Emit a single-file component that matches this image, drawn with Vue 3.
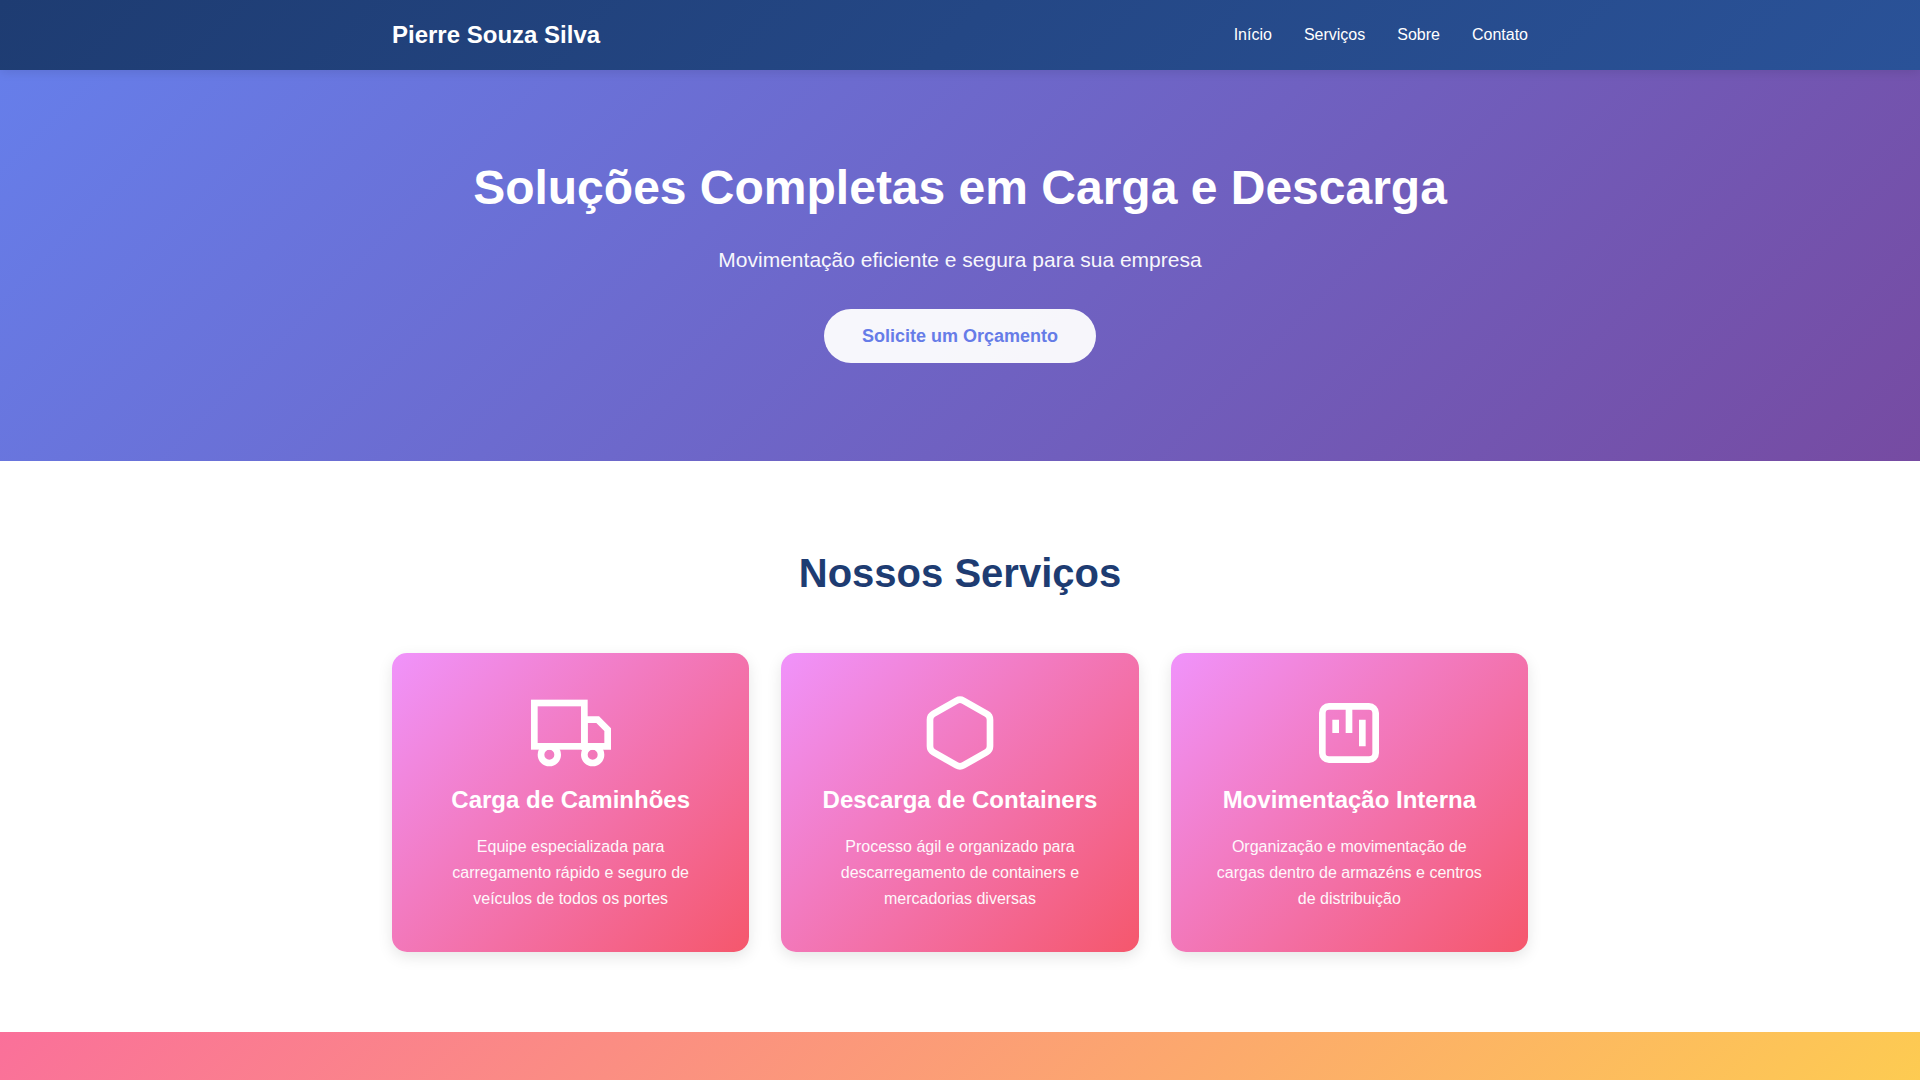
<script setup>
const links = [
  { label: 'Início', href: '#inicio' },
  { label: 'Serviços', href: '#servicos' },
  { label: 'Sobre', href: '#sobre' },
  { label: 'Contato', href: '#contato' },
]

const services = [
  {
    icon: 'truck',
    title: 'Carga de Caminhões',
    text: 'Equipe especializada para carregamento rápido e seguro de veículos de todos os portes',
  },
  {
    icon: 'container',
    title: 'Descarga de Containers',
    text: 'Processo ágil e organizado para descarregamento de containers e mercadorias diversas',
  },
  {
    icon: 'board',
    title: 'Movimentação Interna',
    text: 'Organização e movimentação de cargas dentro de armazéns e centros de distribuição',
  },
]
</script>

<template>
  <div class="page">
    <header class="header">
      <div class="container header-row">
        <div class="logo">Pierre Souza Silva</div>
        <nav class="nav">
          <a v-for="link in links" :key="link.href" :href="link.href">{{ link.label }}</a>
        </nav>
      </div>
    </header>

    <section id="inicio" class="hero">
      <div class="container">
        <h1>Soluções Completas em Carga e Descarga</h1>
        <p>Movimentação eficiente e segura para sua empresa</p>
        <a class="cta" href="#contato">Solicite um Orçamento</a>
      </div>
    </section>

    <section id="servicos" class="services">
      <div class="container">
        <h2>Nossos Serviços</h2>
        <div class="grid">
          <article v-for="service in services" :key="service.icon" class="card">
            <svg class="icon" viewBox="0 0 24 24" aria-hidden="true">
              <template v-if="service.icon === 'truck'">
                <rect x="1" y="3" width="15" height="13" />
                <polygon points="16 8 20 8 23 11 23 16 16 16 16 8" />
                <circle cx="5.5" cy="18.5" r="2.5" />
                <circle cx="18.5" cy="18.5" r="2.5" />
              </template>
              <path
                v-else-if="service.icon === 'container'"
                d="M21 16V8a2 2 0 0 0-1-1.73l-7-4a2 2 0 0 0-2 0l-7 4A2 2 0 0 0 3 8v8a2 2 0 0 0 1 1.73l7 4a2 2 0 0 0 2 0l7-4A2 2 0 0 0 21 16z"
              />
              <template v-else>
                <rect x="4" y="4" width="16" height="16" rx="2" />
                <path d="M8 8v4M12 4v8M16 8v8" />
              </template>
            </svg>
            <h3>{{ service.title }}</h3>
            <p>{{ service.text }}</p>
          </article>
        </div>
      </div>
    </section>

    <section id="sobre" class="about"></section>
  </div>
</template>

<style>
body {
  margin: 0;
}
</style>

<style scoped>
.page {
  display: flex;
  flex-direction: column;
  min-height: 100vh;
  background: #fff;
  color: #333;
  font-family: "Liberation Sans", Arial, sans-serif;
  font-size: 16px;
  line-height: 26px;
}

h1,
h2,
h3,
p {
  margin: 0;
}

.container {
  box-sizing: border-box;
  max-width: 1200px;
  margin: 0 auto;
  padding: 0 32px;
}

.header {
  position: relative;
  z-index: 1;
  padding: 16px 0;
  background: linear-gradient(135deg, #1e3c72 0%, #2a5298 100%);
  box-shadow: 0 2px 10px rgba(0, 0, 0, 0.1);
}

.header-row {
  display: flex;
  justify-content: space-between;
  align-items: center;
}

.logo {
  color: #fff;
  font-size: 24px;
  font-weight: 700;
  line-height: 38px;
}

.nav {
  display: flex;
  gap: 32px;
}

.nav a {
  color: #fff;
  text-decoration: none;
}

.hero {
  padding: 80px 0 98px;
  background: linear-gradient(135deg, #667eea 0%, #764ba2 100%);
  color: #fff;
  text-align: center;
}

.hero h1 {
  margin-bottom: 16px;
  font-size: 48px;
  line-height: 76px;
}

.hero p {
  margin-bottom: 32px;
  font-size: 21px;
  line-height: 35px;
  opacity: 0.95;
}

.cta {
  display: block;
  width: fit-content;
  margin: 0 auto;
  padding: 16px 38px;
  border-radius: 50px;
  background: #fff;
  color: #667eea;
  font-size: 18px;
  font-weight: 700;
  line-height: 22px;
  text-decoration: none;
  opacity: 0.95;
}

.services {
  padding: 80px 0;
}

.services h2 {
  margin-bottom: 48px;
  color: #1e3c72;
  font-size: 40px;
  line-height: 64px;
  text-align: center;
}

.grid {
  display: grid;
  grid-template-columns: repeat(auto-fit, minmax(280px, 1fr));
  gap: 32px;
}

.card {
  padding: 40px;
  border-radius: 15px;
  background: linear-gradient(135deg, #f093fb 0%, #f5576c 100%);
  box-shadow: 0 5px 15px rgba(0, 0, 0, 0.1);
  color: #fff;
  text-align: center;
}

.icon {
  display: block;
  width: 80px;
  height: 80px;
  margin: 0 auto 8px;
  fill: none;
  stroke: #fff;
  stroke-width: 2;
}

.card h3 {
  margin-bottom: 16px;
  font-size: 24px;
  line-height: 37px;
}

.card p {
  opacity: 0.95;
}

.about {
  flex: 1;
  background: linear-gradient(135deg, #fa709a 0%, #fee140 100%) 0 0 / 100% 520px no-repeat;
}
</style>
